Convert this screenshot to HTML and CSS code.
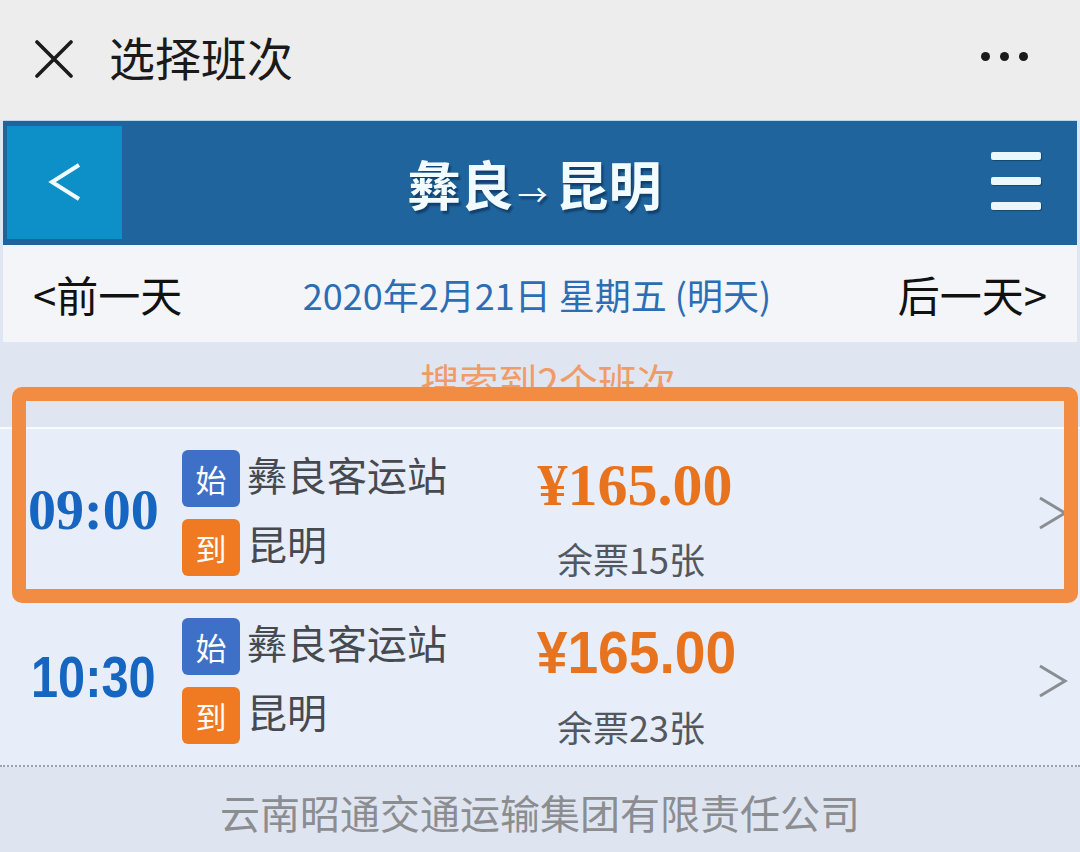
FILE: index.html
```html
<!DOCTYPE html>
<html lang="zh-CN">
<head>
    <meta charset="UTF-8">
    <meta name="viewport" content="width=device-width, initial-scale=1.0">
    <title>选择班次</title>
    <link rel="stylesheet" href="styles.css">
</head>
<body>
    <div class="topbar">
        <svg class="close-icon" width="38" height="38" viewBox="0 0 38 38">
            <path d="M2 2 L36 36 M36 2 L2 36" stroke="#1b1b1b" stroke-width="3.6" stroke-linecap="round"/>
        </svg>
        <div class="page-title">选择班次</div>
        <div class="more"><span></span><span></span><span></span></div>
    </div>

    <div class="routebar">
        <div class="back">
            <svg width="34" height="40" viewBox="0 0 34 40">
                <path d="M31 3 L4 20 L31 37" fill="none" stroke="#f2fbff" stroke-width="4"/>
            </svg>
        </div>
        <div class="route">彝良<span class="arrow">→</span>昆明</div>
        <div class="menu"><span></span><span></span><span></span></div>
    </div>

    <div class="daterow">
        <div class="day-link">&lt;前一天</div>
        <div class="date">2020年2月21日 星期五 (明天)</div>
        <div class="day-link">后一天&gt;</div>
    </div>

    <div class="count">
        <div class="count-clip">
            <div class="count-text">搜索到2个班次</div>
        </div>
    </div>

    <div class="list">
        <div class="trip first">
            <div class="time"><span class="serif">09:00</span></div>
            <div class="stops">
                <div class="stop"><span class="tag start">始</span><span class="name">彝良客运站</span></div>
                <div class="stop"><span class="tag end">到</span><span class="name">昆明</span></div>
            </div>
            <div class="fare">
                <div class="price"><span class="serif">¥165.00</span></div>
                <div class="left">余票15张</div>
            </div>
            <svg class="chev" width="30" height="34" viewBox="0 0 30 34">
                <path d="M2 2 L27 17 L2 32" fill="none" stroke="#8a8d92" stroke-width="3"/>
            </svg>
        </div>
        <div class="trip">
            <div class="time"><span class="narrow">10:30</span></div>
            <div class="stops">
                <div class="stop"><span class="tag start">始</span><span class="name">彝良客运站</span></div>
                <div class="stop"><span class="tag end">到</span><span class="name">昆明</span></div>
            </div>
            <div class="fare">
                <div class="price"><span class="narrow">¥165.00</span></div>
                <div class="left">余票23张</div>
            </div>
            <svg class="chev" width="30" height="34" viewBox="0 0 30 34">
                <path d="M2 2 L27 17 L2 32" fill="none" stroke="#8a8d92" stroke-width="3"/>
            </svg>
        </div>
    </div>

    <div class="footer">云南昭通交通运输集团有限责任公司</div>

    <div class="highlight"></div>
</body>
</html>
```

FILE: styles.css
```css
body {
    margin: 0;
    width: 1080px;
    height: 852px;
    overflow: hidden;
    position: relative;
    background: #dfe6f1;
    font-family: "Noto Sans CJK SC", "Noto Sans", sans-serif;
}

.topbar {
    height: 120px;
    background: #ededed;
    display: flex;
    align-items: center;
    padding: 0 52px 0 35px;
}

.close-icon {
    margin-top: -2px;
}

.page-title {
    margin-left: 36px;
    font-size: 46px;
    line-height: 46px;
    color: #1a1a1a;
    margin-top: -8px;
}

.more {
    margin-left: auto;
    display: flex;
    gap: 10px;
    margin-top: -8px;
}

.more span {
    width: 9px;
    height: 9px;
    border-radius: 50%;
    background: #1a1a1a;
}

.routebar {
    margin: 0 3px;
    height: 125px;
    background: #1f649c;
    display: flex;
    align-items: center;
    border-top: 1px solid #bcd6ea;
    box-sizing: border-box;
}

.back {
    width: 115px;
    height: 113px;
    margin-left: 4px;
    background: #0d8fc8;
    display: flex;
    align-items: center;
    justify-content: center;
    margin-top: -2px;
}

.route {
    flex: 1;
    text-align: center;
    font-size: 53px;
    font-weight: bold;
    color: #f2fbff;
    text-shadow: 2px 3px 2px rgba(0, 20, 50, 0.45);
    padding-right: 44px;
}

.arrow {
    font-size: 30px;
    font-weight: normal;
    margin: 0 8px 0 4px;
}

.menu {
    width: 50px;
    margin-right: 36px;
    display: flex;
    flex-direction: column;
    gap: 17px;
    margin-top: -4px;
}

.menu span {
    height: 8px;
    background: #e9f8fd;
    border-radius: 2px;
    box-shadow: 1px 1px 1px rgba(0, 0, 0, 0.3);
}

.daterow {
    margin: 0 3px;
    height: 97px;
    background: #f3f5f9;
    display: flex;
    align-items: center;
    justify-content: space-between;
    padding: 0 30px;
}

.day-link {
    font-size: 42px;
    color: #111;
}

.date {
    font-size: 36px;
    color: #2d6db4;
    margin-right: 6px;
}

.count {
    height: 85px;
}

.count-clip {
    height: 45px;
    overflow: hidden;
}

.count-text {
    padding-top: 19px;
    text-align: center;
    font-size: 39px;
    line-height: 39px;
    color: #f19b66;
    padding-left: 16px;
}

.trip {
    height: 170px;
    display: flex;
    align-items: center;
    padding-left: 28px;
    background: #e7eef9;
    box-sizing: border-box;
}

.trip.first {
    border-top: 2px solid #f7faff;
}

.trip + .trip {
    border-bottom: 2px dotted #9ea3aa;
}

.time {
    width: 154px;
    color: #1565c1;
    font-size: 56px;
    line-height: 60px;
    padding-bottom: 12px;
}

.serif {
    font-family: "Liberation Serif", serif;
    font-weight: bold;
}

.narrow {
    display: inline-block;
    font-family: "Liberation Sans", sans-serif;
    font-weight: bold;
}

.time .narrow {
    font-size: 58px;
    margin-left: 3px;
    transform: scaleX(0.84);
    transform-origin: left center;
}

.stops {
    width: 353px;
    display: flex;
    flex-direction: column;
    gap: 12px;
}

.stop {
    display: flex;
    align-items: center;
    gap: 7px;
    font-size: 40px;
    line-height: 57px;
    color: #464a50;
}

.name {
    padding-bottom: 8px;
    line-height: 49px;
}

.tag {
    width: 58px;
    height: 57px;
    border-radius: 6px;
    color: #fff;
    font-size: 31px;
    display: flex;
    align-items: center;
    justify-content: center;
}

.tag.start {
    background: #3e70c8;
}

.tag.end {
    background: #f07a22;
}

.fare {
    width: 200px;
    display: flex;
    flex-direction: column;
    align-items: center;
    gap: 23px;
}

.price {
    width: 200px;
    color: #e8731f;
    line-height: 60px;
    font-size: 60px;
    text-align: center;
    white-space: nowrap;
}

.price .narrow {
    font-size: 60px;
    margin-left: -7px;
    transform: scaleX(0.92);
    transform-origin: center;
}

.left {
    font-size: 36px;
    line-height: 40px;
    color: #54585e;
    margin-left: -8px;
}

.chev {
    margin-left: auto;
    margin-right: 12px;
}

.footer {
    height: 85px;
    text-align: center;
    font-size: 40px;
    line-height: 90px;
    color: #8b8d91;
    background: #dfe5f0;
}

.highlight {
    position: absolute;
    left: 12px;
    top: 387px;
    width: 1066px;
    height: 216px;
    border: 14px solid #f28c42;
    border-radius: 10px;
    box-sizing: border-box;
}
```
